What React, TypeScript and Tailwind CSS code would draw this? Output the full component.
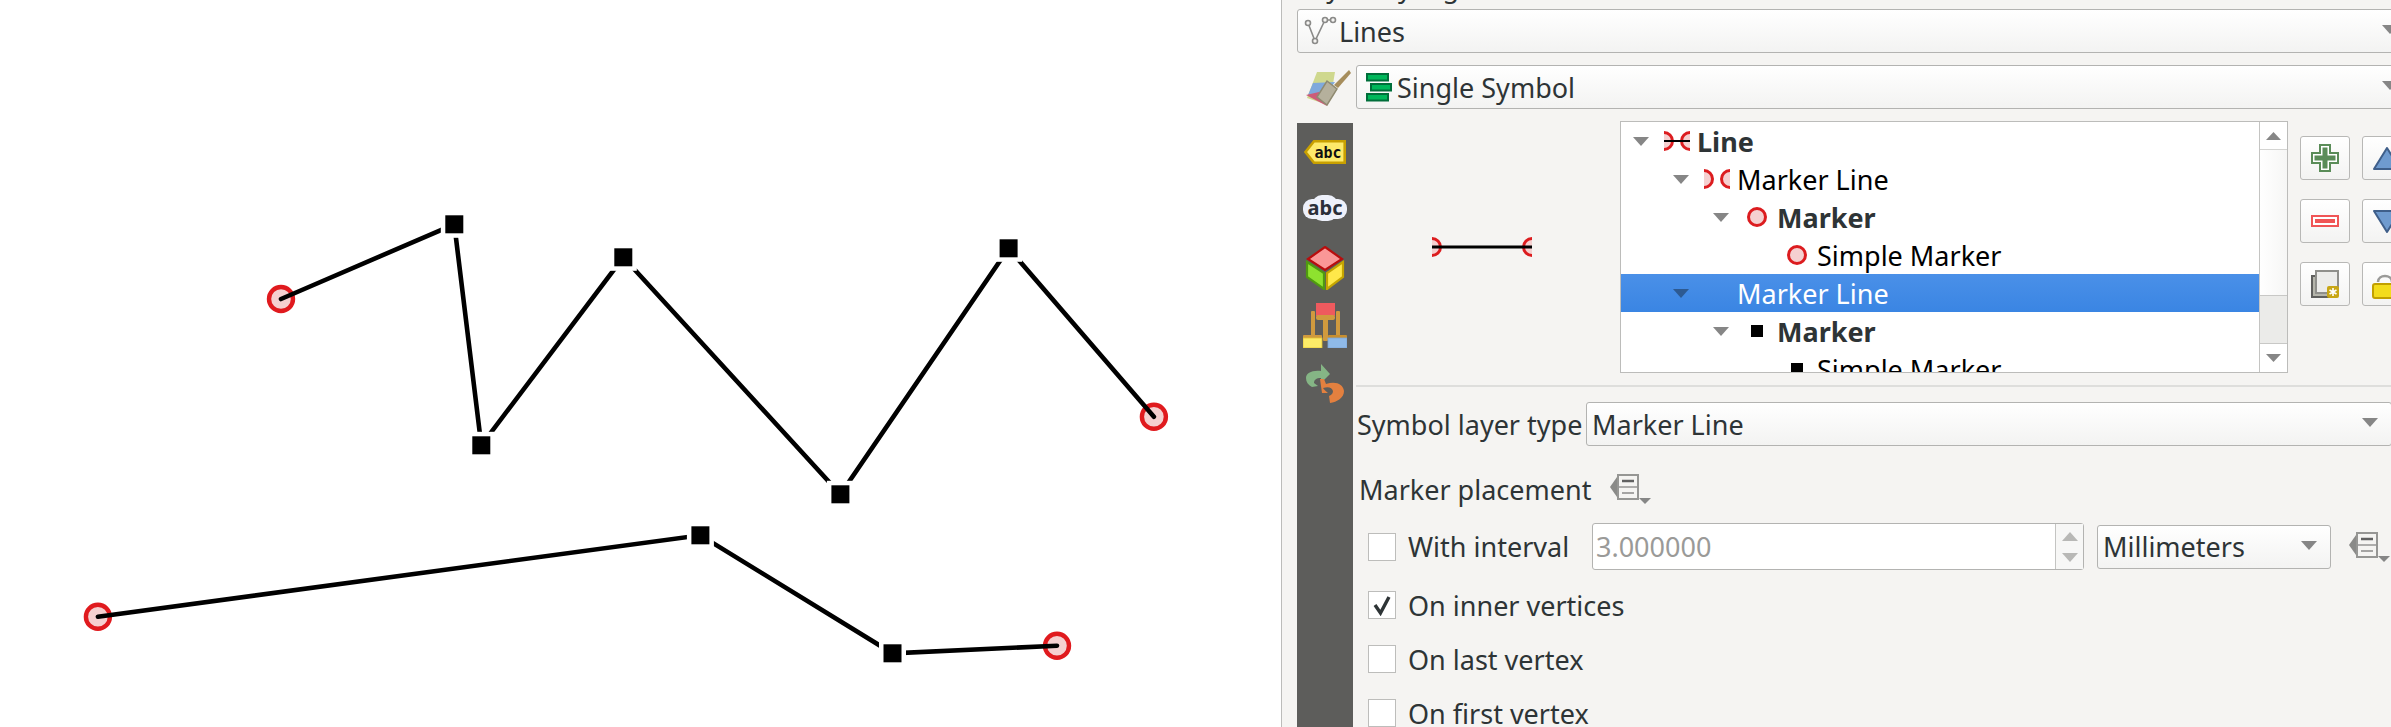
import React from "react";

const Tri = ({ className = "fill-[#868686]", w = 16, h = 9, up = false }: { className?: string; w?: number; h?: number; up?: boolean }) => (
  <svg width={w} height={h} viewBox="0 0 16 9" preserveAspectRatio="none" className={"shrink-0 " + className}>
    <path d={up ? "M8 0L16 9H0Z" : "M0 0H16L8 9Z"} />
  </svg>
);

const Combo = ({ className, children }: { className: string; children: React.ReactNode }) => (
  <div className={"flex items-center h-[44px] shrink-0 rounded-[3px] border border-[#b3b3b1] bg-linear-to-b from-white to-[#f3f3f2] pl-[5px] pr-[13px] text-[#2e3436] " + className}>
    <div className="flex-1 flex items-center min-w-0 whitespace-nowrap">{children}</div>
    <Tri className="fill-[#868686] mb-[3px]" />
  </div>
);

const DataDefined = () => (
  <svg width="41" height="30" viewBox="0 0 41 30" className="shrink-0">
    <path d="M7 3L0 13L7 23Z" fill="#8a8a88" />
    <rect x="8" y="1" width="20" height="24" fill="#f5f4f2" stroke="#969694" strokeWidth="2" />
    <path d="M8 13H28" stroke="#969694" strokeWidth="1.5" />
    <path d="M12 7H24" stroke="#616161" strokeWidth="2.5" />
    <path d="M12 19H24" stroke="#8a8a88" strokeWidth="1.5" />
    <path d="M29 24H41L35 30Z" fill="#868686" />
  </svg>
);

const Check = ({ checked, label, labelClass = "" }: { checked?: boolean; label: string; labelClass?: string }) => (
  <>
    <div className="w-[28px] h-[28px] shrink-0 border border-[#bdbdbb] bg-white flex items-center justify-center">
      {checked && (
        <svg width="22" height="22" viewBox="0 0 22 22">
          <path d="M4 11L9.5 19L18 3" fill="none" stroke="#2e3436" strokeWidth="3.4" />
        </svg>
      )}
    </div>
    <span className={"ml-[12px] whitespace-nowrap text-[#2e3436] " + labelClass}>{label}</span>
  </>
);

const MarkerEnds = ({ line }: { line?: boolean }) => (
  <svg width="26" height="20" viewBox="0 0 26 20" className="shrink-0">
    <circle cx="0" cy="10" r="8.5" fill="#f5d0d0" stroke="#dc1c1f" strokeWidth="3" />
    <circle cx="26" cy="10" r="8.5" fill="#f5d0d0" stroke="#dc1c1f" strokeWidth="3" />
    {line && <path d="M0 10H26" stroke="#000" strokeWidth="2" />}
  </svg>
);
const CircleIcon = () => (
  <svg width="26" height="22" viewBox="0 0 26 22" className="shrink-0">
    <circle cx="13" cy="11" r="8.5" fill="#f5d0d0" stroke="#dc1c1f" strokeWidth="3" />
  </svg>
);
const SquareIcon = () => (
  <svg width="26" height="22" viewBox="0 0 26 22" className="shrink-0">
    <rect x="7" y="5" width="12" height="12" fill="#000" />
  </svg>
);

type Row = { pl: string; arrow: boolean; icon: React.ReactNode; text: string; bold?: boolean; selected?: boolean };
const rows: Row[] = [
  { pl: "pl-[12px]", arrow: true, icon: <MarkerEnds line />, text: "Line", bold: true },
  { pl: "pl-[52px]", arrow: true, icon: <MarkerEnds />, text: "Marker Line" },
  { pl: "pl-[92px]", arrow: true, icon: <CircleIcon />, text: "Marker", bold: true },
  { pl: "pl-[132px]", arrow: false, icon: <CircleIcon />, text: "Simple Marker" },
  { pl: "pl-[52px]", arrow: true, icon: <span className="w-[26px]" />, text: "Marker Line", selected: true },
  { pl: "pl-[92px]", arrow: true, icon: <SquareIcon />, text: "Marker", bold: true },
  { pl: "pl-[132px]", arrow: false, icon: <SquareIcon />, text: "Simple Marker" },
];

const TreeRow = ({ r }: { r: Row }) => (
  <div className={"flex items-center h-[38px] shrink-0 " + r.pl + (r.selected ? " bg-linear-to-b from-[#4a90e8] to-[#3a85e3] text-white" : r.bold ? " font-bold text-[#2e3436]" : " text-[#000]")}>
    <div className="w-[31px] shrink-0 flex items-center">
      {r.arrow && <Tri className={r.selected ? "fill-[#2d5a92]" : "fill-[#868686]"} />}
    </div>
    {r.icon}
    <span className="ml-[7px] whitespace-nowrap">{r.text}</span>
  </div>
);

const ToolBtn = ({ children }: { children: React.ReactNode }) => (
  <div className="w-[50px] h-[44px] shrink-0 rounded-[3px] border border-[#b8b8b6] bg-linear-to-b from-white to-[#f3f3f2] flex items-center justify-center">
    {children}
  </div>
);

const Canvas = () => {
  const l1 = [[281, 299], [454.3, 224.3], [481.3, 445.3], [623.3, 257.3], [840.4, 494.3], [1008.6, 248.3], [1153.9, 416.7]];
  const l2 = [[97.9, 616.7], [700.4, 535.3], [892.5, 653.3], [1057, 645.7]];
  const pts = (a: number[][]) => a.map((p) => p.join(",")).join(" ");
  return (
    <svg width="1281" height="727" viewBox="0 0 1281 727" className="block">
      {[l1, l2].map((l, i) => (
        <g key={i}>
          {[l[0], l[l.length - 1]].map((p, j) => (
            <circle key={j} cx={p[0]} cy={p[1]} r="12" fill="#f5d0d0" stroke="#e01a1e" strokeWidth="4.4" />
          ))}
          <polyline points={pts(l)} fill="none" stroke="#000" strokeWidth="4.6" strokeLinejoin="miter" strokeLinecap="round" />
          {l.slice(1, -1).map((p, j) => (
            <g key={j}>
              <rect x={p[0] - 13.5} y={p[1] - 13.5} width="27" height="27" fill="#fff" />
              <rect x={p[0] - 9} y={p[1] - 9} width="18" height="18" fill="#000" />
            </g>
          ))}
        </g>
      ))}
    </svg>
  );
};

const SideIcons = () => (
  <div className="w-[56px] mt-[2px] bg-[#5d5d5b] shrink-0 h-[604px] flex flex-col items-center">
    <svg width="42" height="24" viewBox="0 0 42 24" className="mt-[17px] shrink-0">
      <path d="M10 1.3H40.7V22.7H10L1.5 12Z" fill="#fdea6a" stroke="#c8a000" strokeWidth="2.6" />
      <text x="24" y="18" textAnchor="middle" fontFamily="'DejaVu Sans Mono', monospace" fontWeight="700" fontSize="15" fill="#111">abc</text>
    </svg>
    <svg width="46" height="26" viewBox="0 0 46 26" className="mt-[31px] shrink-0">
      <rect x="1" y="4" width="44" height="20" rx="9" fill="#eef1fb" />
      <rect x="10" y="0" width="26" height="26" rx="10" fill="#eef1fb" />
      <text x="23" y="19.5" textAnchor="middle" fontFamily="'Noto Sans', sans-serif" fontWeight="700" fontSize="20" fill="#2b2f3a">abc</text>
    </svg>
    <svg width="40" height="44" viewBox="0 0 40 44" className="mt-[25px] shrink-0">
      <path d="M20 1L37 13L20 24L3 13Z" fill="#fa9797" stroke="#b80d0d" strokeWidth="2.2" />
      <path d="M2 16L19 27V43L2 31Z" fill="#8ee22f" stroke="#4f9a10" strokeWidth="2.2" />
      <path d="M38 16L22 27V43L38 31Z" fill="#ffe84a" stroke="#c5a500" strokeWidth="2.2" />
    </svg>
    <svg width="44" height="45" viewBox="0 0 44 45" className="mt-[13px] shrink-0">
      <rect x="8" y="8" width="4" height="28" rx="1" fill="#d09a3e" />
      <rect x="33" y="8" width="4" height="28" rx="1" fill="#d09a3e" />
      <rect x="20" y="16" width="5" height="22" rx="1" fill="#d09a3e" />
      <rect x="13" y="0" width="19" height="13" fill="#ee5a5e" />
      <rect x="13" y="12" width="19" height="5" rx="2" fill="#d09a3e" />
      <rect x="0" y="32" width="19" height="4" rx="1" fill="#d09a3e" />
      <rect x="25" y="32" width="19" height="4" rx="1" fill="#c88f30" />
      <rect x="0" y="35" width="19" height="10" fill="#fdec68" stroke="#e2c030" strokeWidth="0.8" />
      <rect x="25" y="35" width="19" height="10" fill="#8fbae8" stroke="#7aa5d8" strokeWidth="0.8" />
    </svg>
    <svg width="38" height="39" viewBox="0 0 38 39" className="mt-[16px] shrink-0">
      <path d="M15 0L24 10L15 19V14C10 14 8 16 8 19L12 22L6 23C2 21 0 18 0 14C0 9 6 6 15 7Z" fill="#85b585" />
      <path d="M14 15L16 29H22C20 27 18 26 17 24C23 22 26 24 27 27C27 30 25 31 23 32L24 39C31 38 38 34 38 27C37 20 30 17 20 20L18 15Z" fill="#e3803f" />
    </svg>
  </div>
);

export default function App() {
  return (
    <div className="flex w-[2391px] h-[727px] overflow-hidden bg-white font-['Noto_Sans',sans-serif] text-[27px] leading-none">
      <div className="w-[1281px] shrink-0 bg-white">
        <Canvas />
      </div>
      <div className="flex-1 min-w-0 border-l border-[#bcbcba] bg-[#f5f4f2] pl-[15px] overflow-hidden flex flex-col">
        {/* clipped dock title */}
        <div className="h-[9px] shrink-0 overflow-hidden relative">
          <span className="absolute left-0 bottom-[9px] whitespace-nowrap text-[#2e3436]">Layer Styling</span>
        </div>

        <Combo className="w-[1115px]">
          <svg width="34" height="30" viewBox="0 0 34 30" className="shrink-0 mr-[2px]">
            <path d="M5 7L12 25L22 4H31" fill="none" stroke="#8a8a88" strokeWidth="1.6" />
            <circle cx="5" cy="7" r="2.5" fill="#f5f4f2" stroke="#8a8a88" strokeWidth="1.6" />
            <circle cx="12" cy="25" r="2.5" fill="#f5f4f2" stroke="#8a8a88" strokeWidth="1.6" />
            <circle cx="22" cy="4" r="2.5" fill="#f5f4f2" stroke="#8a8a88" strokeWidth="1.6" />
            <circle cx="30" cy="4" r="2.5" fill="#f5f4f2" stroke="#8a8a88" strokeWidth="1.6" />
          </svg>
          Lines
        </Combo>

        <div className="flex items-center mt-[12px] shrink-0">
          <div className="w-[59px] shrink-0 flex pl-[8px]">
            <svg width="46" height="38" viewBox="0 0 46 38">
              <path d="M2 30L12 4H30L28 16L20 36Z" fill="#cfd88e" />
              <path d="M8 15L30 14L20 28L3 27Z" fill="#7fa9dc" />
              <path d="M1 27L14 24L22 38Z" fill="#cc5c78" />
              <path d="M44 2L46 5L33 20L29 17Z" fill="#a68d5c" />
              <path d="M22 13L32 21L22 37L12 29Z" fill="#b5b09c" stroke="#8f8a70" strokeWidth="1.5" />
            </svg>
          </div>
          <Combo className="w-[1056px] !pl-[9px]">
            <svg width="26" height="29" viewBox="0 0 26 29" className="shrink-0 mr-[5px]">
              <rect x="1" y="1" width="21" height="6.5" fill="#00b75a" stroke="#006e3a" strokeWidth="2" />
              <rect x="5" y="11" width="20" height="6.5" fill="#00b75a" stroke="#006e3a" strokeWidth="2" />
              <rect x="1" y="21" width="21" height="6.5" fill="#00b75a" stroke="#006e3a" strokeWidth="2" />
            </svg>
            Single Symbol
          </Combo>
        </div>

        <div className="flex mt-[12px] min-h-0 flex-1">
          <SideIcons />
          <div className="ml-[3px] flex-1 min-w-0 flex flex-col">
            <div className="flex shrink-0 h-[252px]">
              <div className="w-[264px] shrink-0 pl-[76px] pt-[116px]">
                <svg width="100" height="20" viewBox="0 0 100 20" className="block">
                  <circle cx="0" cy="10" r="8.5" fill="#f5d0d0" stroke="#dc1c1f" strokeWidth="3" />
                  <circle cx="100" cy="10" r="8.5" fill="#f5d0d0" stroke="#dc1c1f" strokeWidth="3" />
                  <path d="M0 10H100" stroke="#000" strokeWidth="3" />
                </svg>
              </div>
              <div className="w-[668px] shrink-0 border border-[#bcbcba] bg-white flex overflow-hidden">
                <div className="flex-1 min-w-0 flex flex-col overflow-hidden">
                  {rows.map((r, i) => (
                    <TreeRow key={i} r={r} />
                  ))}
                </div>
                <div className="w-[28px] shrink-0 border-l border-[#c4c4c2] flex flex-col">
                  <div className="h-[28px] shrink-0 border-b border-[#d4d4d2] flex items-center justify-center">
                    <Tri up w={15} h={8} />
                  </div>
                  <div className="h-[145px] shrink-0 bg-linear-to-r from-white to-[#f6f6f5]" />
                  <div className="h-[49px] shrink-0 bg-[#ebebe9] border-t border-b border-[#c8c8c6]" />
                  <div className="flex-1 flex items-center justify-center">
                    <Tri w={15} h={8} />
                  </div>
                </div>
              </div>
              <div className="ml-[12px] mt-[15px] w-[112px] shrink-0 grid grid-cols-2 gap-x-[12px] gap-y-[19px] auto-rows-[44px]">
                <ToolBtn>
                  <svg width="28" height="28" viewBox="0 0 28 28">
                    <path d="M8 0H20V8H28V20H20V28H8V20H0V8H8Z" fill="#5a8c58" />
                    <path d="M10 2H18V10H26V18H18V26H10V18H2V10H10Z" fill="#fff" />
                    <path d="M11.5 3.5H16.5V11.5H24.5V16.5H16.5V24.5H11.5V16.5H3.5V11.5H11.5Z" fill="#5a8c58" />
                  </svg>
                </ToolBtn>
                <ToolBtn>
                  <svg width="28" height="23" viewBox="0 0 28 23">
                    <path d="M14 1L27 22H1Z" fill="#6f9bcf" stroke="#3f5f8a" strokeWidth="2" strokeLinejoin="round" />
                  </svg>
                </ToolBtn>
                <ToolBtn>
                  <svg width="28" height="12" viewBox="0 0 28 12">
                    <rect width="28" height="12" fill="#f05556" />
                    <rect x="2" y="2" width="24" height="8" fill="#fff" />
                    <rect x="4" y="4" width="20" height="4" fill="#f05556" />
                  </svg>
                </ToolBtn>
                <ToolBtn>
                  <svg width="28" height="23" viewBox="0 0 28 23">
                    <path d="M14 22L27 1H1Z" fill="#6f9bcf" stroke="#3f5f8a" strokeWidth="2" strokeLinejoin="round" />
                  </svg>
                </ToolBtn>
                <ToolBtn>
                  <svg width="28" height="28" viewBox="0 0 28 28">
                    <rect x="1" y="6" width="22" height="21" fill="#b5b5ab" stroke="#5f5f5d" strokeWidth="2" />
                    <rect x="5" y="1" width="22" height="22" fill="#ececea" stroke="#8f8f8b" strokeWidth="2" />
                    <rect x="16" y="16" width="12" height="12" rx="2" fill="#c8a614" />
                    <path d="M22 18V26M18.5 20L25.5 24M25.5 20L18.5 24" stroke="#fff" strokeWidth="1.6" />
                  </svg>
                </ToolBtn>
                <ToolBtn>
                  <svg width="30" height="30" viewBox="0 0 30 30">
                    <path d="M6 13C6 5 20 5 20 13" fill="none" stroke="#9a9a98" strokeWidth="2.5" />
                    <rect x="1" y="15" width="28" height="14" rx="2" fill="#f3dc1c" stroke="#c2a000" strokeWidth="2" />
                  </svg>
                </ToolBtn>
              </div>
            </div>

            <div className="h-[2px] mt-[12px] shrink-0 bg-[#dededc]" />

            <div className="flex items-center mt-[15px] shrink-0">
              <span className="w-[230px] shrink-0 pl-px whitespace-nowrap text-[#2e3436]">Symbol layer type</span>
              <Combo className="w-[806px]">Marker Line</Combo>
            </div>

            <div className="flex items-center h-[30px] mt-[28px] pl-[3px] shrink-0 text-[#2e3436]">
              <span className="w-[251px] shrink-0 whitespace-nowrap">Marker placement</span>
              <DataDefined />
            </div>

            <div className="flex items-center h-[47px] mt-[19px] pl-[12px] shrink-0">
              <Check label="With interval" labelClass="w-[184px] shrink-0" />
              <div className="w-[492px] h-[47px] shrink-0 rounded-[3px] border border-[#b3b3b1] bg-white flex items-center">
                <span className="flex-1 pl-[3px] text-[#9a9a98]">3.000000</span>
                <div className="w-[28px] h-full border-l border-[#c4c4c2] bg-[#f7f7f6] flex flex-col items-center justify-center gap-[12px]">
                  <Tri up className="fill-[#b8b8b6]" />
                  <Tri className="fill-[#b8b8b6]" />
                </div>
              </div>
              <Combo className="ml-[13px] w-[234px]">Millimeters</Combo>
              <div className="ml-[18px]"><DataDefined /></div>
            </div>

            <div className="flex items-center h-[28px] mt-[21px] pl-[12px] shrink-0">
              <Check checked label="On inner vertices" />
            </div>
            <div className="flex items-center h-[28px] mt-[26px] pl-[12px] shrink-0">
              <Check label="On last vertex" />
            </div>
            <div className="flex items-center h-[28px] mt-[26px] pl-[12px] shrink-0">
              <Check label="On first vertex" />
            </div>
          </div>
        </div>
      </div>
    </div>
  );
}
